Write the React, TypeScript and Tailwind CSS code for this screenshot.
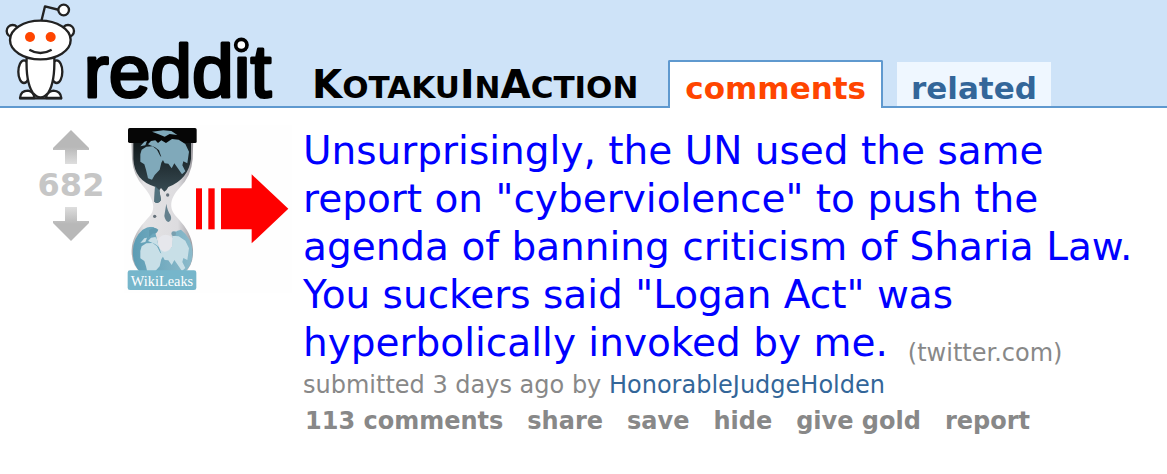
const actions = ['share', 'save', 'hide', 'give gold', 'report'];

function Logo() {
  return (
    <svg viewBox="0 0 840 318" className="h-[106px] w-[280px] overflow-visible" role="img" aria-label="reddit">
      <g fill="#fff" stroke="#222" strokeWidth="7" strokeLinejoin="round">
        <path d="M124 64 L135 19 L178 30" fill="none" strokeWidth="7" />
        <circle cx="191" cy="30" r="16" />
        <circle cx="38" cy="93" r="18" />
        <circle cx="204" cy="93" r="18" />
        <ellipse cx="72" cy="215" rx="17" ry="34" />
        <ellipse cx="170" cy="215" rx="17" ry="34" />
        <path d="M60 294 Q62 272 84 272 Q102 275 103 294 Z" />
        <path d="M138 294 Q140 275 160 272 Q182 273 184 294 Z" />
        <path d="M80 172 H163 Q165 248 145 278 Q122 306 98 278 Q77 245 80 172 Z" />
        <ellipse cx="121" cy="120" rx="91" ry="58" />
        <path d="M88 149 Q121 169 155 149" fill="none" />
        <path d="M58 295 H186" />
      </g>
      <circle cx="90" cy="111" r="15" fill="#ff4500" />
      <circle cx="152" cy="111" r="15" fill="#ff4500" />
      <text
        x="251"
        y="291"
        fontSize="225"
        stroke="#000"
        strokeWidth="9"
        strokeLinejoin="round"
        className="font-['Liberation_Sans',sans-serif]"
      >
        reddit
      </text>
      <circle cx="724" cy="135" r="17" fill="#fff" stroke="#000" strokeWidth="11" />
    </svg>
  );
}

// landmasses, shared by both halves of the hourglass
function Continents() {
  return (
    <>
      <path d="M80 104 L94 95 L113 94 L126 104 L136 124 L148 128 L139 143 L134 164 L119 180 L111 194 L99 190 L93 164 L88 148 L76 140 L76 118 Z" />
      <path d="M99 88 L108 78 L121 76 L129 84 L139 76 L153 84 L171 72 L191 74 L211 87 L222 110 L217 145 L205 139 L202 151 L211 169 L201 178 L188 159 L178 145 L170 160 L160 146 L149 145 L139 126 L132 106 L120 97 Z" />
      <path d="M111 50 L145 46 L169 48 L187 60 L164 57 L149 65 L131 58 Z" />
      <path d="M76 94 L88 80 L96 78 L91 91 Z" />
    </>
  );
}

function Thumbnail() {
  return (
    <svg viewBox="27 30 504 504" className="size-[168px]" role="img" aria-label="WikiLeaks hourglass and arrow">
      <defs>
        <linearGradient id="glass" x1="0" x2="1" y1="0" y2="0">
          <stop offset="0" stopColor="#aaa9ac" />
          <stop offset="0.2" stopColor="#e4e3e5" />
          <stop offset="0.75" stopColor="#dddcdf" />
          <stop offset="1" stopColor="#9b999e" />
        </linearGradient>
        <linearGradient id="night" x1="0" x2="0" y1="0" y2="1">
          <stop offset="0" stopColor="#101719" />
          <stop offset="1" stopColor="#40565f" />
        </linearGradient>
        <linearGradient id="sea" x1="0" x2="1" y1="0" y2="0">
          <stop offset="0" stopColor="#5c9cb4" />
          <stop offset="1" stopColor="#8ebccc" />
        </linearGradient>
        <clipPath id="lowerGlobe">
          <path d="M53 410 Q55 367 83 344 Q103 332 117 337 L130 390 Q143 420 171 395 L173 352 L198 344 Q231 370 233 410 Q234 450 206 475 H78 Q53 450 53 410 Z" />
        </clipPath>
      </defs>
      <rect x="27" y="30" width="504" height="504" fill="#fefefe" />
      <path
        d="M49 72 H235 L233 132 Q229 184 194 218 C171 243 162 268 174 291 C184 311 232 342 234 405 Q236 450 208 474 H78 Q48 448 50 405 C54 342 104 311 112 291 C121 265 105 238 88 218 Q54 182 51 132 Z"
        fill="url(#glass)"
      />
      <path d="M55 80 H228 V132 Q220 193 160 216 Q154 228 148 230 L138 219 L133 226 L138 255 Q130 270 118 260 L120 215 Q58 197 55 132 Z" fill="url(#night)" />
      <path d="M120 213 L133 226 L138 255 Q130 270 118 260 Z" fill="#53737f" />
      <path d="M39 44 Q39 39 44 39 H240 Q245 39 245 44 V80 Q245 84 240 84 H44 Q39 84 39 79 Z" fill="#060606" />
      <g fill="#80a9ba">
        <Continents />
      </g>
      <path d="M154 266 Q150 289 148 303 Q151 320 161 321 Q173 314 166 299 Q157 287 154 266 Z" fill="#65818e" />
      <circle cx="158" cy="240" r="5" fill="#65717a" />
      <circle cx="119" cy="304" r="5" fill="#65717a" />
      <g clipPath="url(#lowerGlobe)">
        <rect x="50" y="330" width="190" height="150" fill="url(#sea)" />
        <g fill="#c8dfe7" transform="translate(0 290)">
          <Continents />
        </g>
      </g>
      <path d="M102 346 Q116 332 130 344 Q124 359 114 355 L102 366 Z" fill="#619bb0" />
      <path d="M131 369 Q152 350 173 369 L171 394 Q160 414 143 409 Q125 400 131 369 Z" fill="#e6e7ec" />
      <circle cx="176" cy="356" r="7" fill="#799faf" />
      <rect x="38" y="466" width="206" height="59" rx="7" fill="#76b6cb" />
      <text x="141" y="512" textAnchor="middle" fontSize="43" fill="#fff" className="font-['Liberation_Serif',serif]">
        WikiLeaks
      </text>
      <g fill="#fe0000">
        <rect x="243" y="220" width="18" height="123" />
        <rect x="280" y="220" width="19" height="123" />
        <path d="M318 220 H410 V178 L520 281 L410 385 V343 H318 Z" />
      </g>
    </svg>
  );
}

function Arrow({ down = false }: { down?: boolean }) {
  return (
    <svg viewBox="0 0 36 34" className={down ? 'h-[34px] w-9 rotate-180' : 'h-[34px] w-9'}>
      <defs>
        <linearGradient id="stem" x1="0" x2="0" y1="0" y2="1">
          <stop offset="0.5" stopColor="#b8b8b8" />
          <stop offset="1" stopColor="#dedede" />
        </linearGradient>
      </defs>
      <path d="M18 0 L36 18 V20 H24 V34 H12 V20 H0 V18 Z" fill="url(#stem)" />
    </svg>
  );
}

function Header() {
  return (
    <header className="flex items-end border-b-2 border-[#5f99cf] bg-[#cee3f8]">
      <a href="#" className="shrink-0">
        <Logo />
      </a>
      <a href="#" className="ml-8 text-[39px] leading-[38px] font-bold text-black">
        K<span className="text-[31px] uppercase">otaku</span>I<span className="text-[31px] uppercase">n</span>A
        <span className="text-[31px] uppercase">ction</span>
      </a>
      <nav className="-mb-0.5 ml-[30px] flex items-end gap-3.5 text-[31px] leading-[40px] font-bold">
        <a
          href="#"
          className="rounded-t-xs border-2 border-b-0 border-[#5f99cf] bg-white px-[15px] pt-1.5 text-[#ff4500]"
        >
          comments
        </a>
        <a href="#" className="mb-0.5 bg-[#eff7ff] px-3.5 pt-2 leading-9 text-[#336699]">
          related
        </a>
      </nav>
    </header>
  );
}

export default function App() {
  return (
    <div className="min-h-screen bg-white font-['DejaVu_Sans',Verdana,sans-serif]">
      <Header />
      <main className="flex items-start pt-[17px] pr-6 pb-8">
        <div className="ml-[34px] flex w-[74px] shrink-0 flex-col items-center pt-[5px]">
          <button type="button" aria-label="upvote">
            <Arrow />
          </button>
          <div className="text-[32px] leading-[43px] font-bold text-[#c6c6c6]">682</div>
          <button type="button" aria-label="downvote">
            <Arrow down />
          </button>
        </div>
        <a href="#" className="ml-4 shrink-0">
          <Thumbnail />
        </a>
        <div className="ml-[11px] min-w-0 flex-1 pt-0.5">
          <h1 className="text-[39px] leading-[48px] text-[#0000ff]">
            <a href="#">
              Unsurprisingly, the UN used the same report on "cyberviolence" to push the agenda of banning
              criticism of Sharia Law. You suckers said "Logan Act" was hyperbolically invoked by me.
            </a>
            <a href="#" className="ml-5 inline-block align-text-bottom text-2xl leading-6 text-[#888888]">
              (twitter.com)
            </a>
          </h1>
          <p className="text-2xl leading-9 text-[#888888]">
            submitted 3 days ago by{' '}
            <a href="#" className="text-[#336699]">
              HonorableJudgeHolden
            </a>
          </p>
          <div className="flex flex-wrap gap-x-6 pl-0.5 text-2xl leading-9 font-bold text-[#888888]">
            <a href="#">113 comments</a>
            {actions.map((action) => (
              <button key={action} type="button" className="font-bold">
                {action}
              </button>
            ))}
          </div>
        </div>
      </main>
    </div>
  );
}
